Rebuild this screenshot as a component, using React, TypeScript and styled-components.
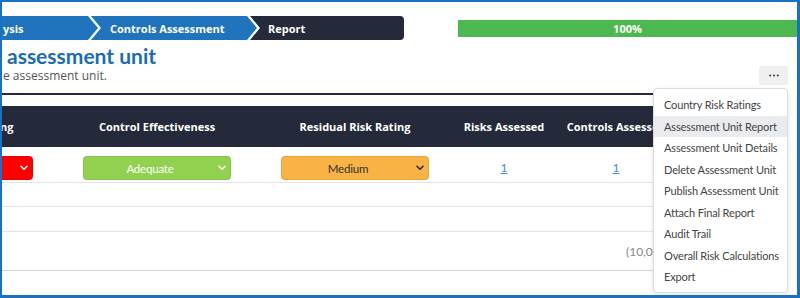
import React from "react";
import styled, { createGlobalStyle, css } from "styled-components";

const GlobalStyle = createGlobalStyle`
  html, body {
    margin: 0;
    padding: 0;
    background: #ffffff;
  }
`;

const BLUE = "#1f74bd";
const DARK = "#252a3a";

const Frame = styled.div`
  width: 800px;
  height: 298px;
  box-sizing: border-box;
  border: solid #1a71c1;
  border-width: 2px 3px 3px 2px;
  overflow: hidden;
  background: #ffffff;
  font-family: Lato, "Open Sans", sans-serif;
  display: flex;
  flex-direction: column;
`;

const TopBar = styled.div`
  display: flex;
  align-items: center;
  height: 24px;
  margin-top: 14px;
`;

const Stepper = styled.div`
  display: flex;
  height: 24px;
`;

const Step = styled.div<{ $kind: "first" | "middle" | "last"; $width: number; $indent: number }>`
  width: ${(p) => p.$width}px;
  height: 24px;
  box-sizing: border-box;
  padding-left: ${(p) => p.$indent}px;
  display: flex;
  align-items: center;
  color: #ffffff;
  font-family: "Open Sans", sans-serif;
  font-weight: 700;
  font-size: 11px;
  white-space: nowrap;
  background: ${(p) => (p.$kind === "last" ? DARK : BLUE)};
  ${(p) =>
    p.$kind === "first" &&
    css`
      clip-path: polygon(0 0, calc(100% - 10px) 0, 100% 50%, calc(100% - 10px) 100%, 0 100%);
    `}
  ${(p) =>
    p.$kind === "middle" &&
    css`
      margin-left: -7px;
      clip-path: polygon(0 0, calc(100% - 10px) 0, 100% 50%, calc(100% - 10px) 100%, 0 100%, 10px 50%);
    `}
  ${(p) =>
    p.$kind === "last" &&
    css`
      margin-left: -7px;
      border-radius: 0 4px 4px 0;
      clip-path: polygon(0 0, 100% 0, 100% 100%, 0 100%, 10px 50%);
    `}
`;

const Progress = styled.div`
  flex: 1;
  margin-left: 54px;
  height: 17px;
  line-height: 17px;
  background: #4cb850;
  color: #ffffff;
  text-align: center;
  font-family: "Open Sans", sans-serif;
  font-weight: 700;
  font-size: 11px;
`;

const TitleRow = styled.div`
  display: flex;
  justify-content: space-between;
  align-items: flex-end;
  margin-top: 3px;
  padding-right: 9px;
`;

const TitleBlock = styled.div`
  display: flex;
  flex-direction: column;
`;

const Title = styled.div`
  font-family: Lato, sans-serif;
  font-weight: 700;
  font-size: 21px;
  line-height: 25px;
  color: #1b6cb3;
  padding-left: 5px;
  white-space: nowrap;
`;

const Subtitle = styled.div`
  font-family: "Open Sans", sans-serif;
  font-size: 12px;
  line-height: 15px;
  color: #555555;
  padding-left: 1px;
  white-space: nowrap;
`;

const MoreWrap = styled.div`
  position: relative;
  margin-bottom: -2px;
`;

const MoreButton = styled.button`
  width: 29px;
  height: 19px;
  padding: 0;
  border: none;
  border-radius: 2px;
  background: #efefef;
  display: flex;
  align-items: center;
  justify-content: center;
`;

const Menu = styled.div`
  position: absolute;
  top: calc(100% + 3px);
  right: 0;
  width: 135px;
  box-sizing: border-box;
  padding: 5px 0 4px;
  background: #ffffff;
  border: 1px solid #dcdcdc;
  border-radius: 4px;
  box-shadow: 0 2px 6px rgba(0, 0, 0, 0.1);
  z-index: 10;
`;

const MenuItem = styled.div<{ $active?: boolean }>`
  height: 21.5px;
  line-height: 21.5px;
  padding-left: 10px;
  font-family: Lato, sans-serif;
  font-size: 11px;
  letter-spacing: -0.15px;
  color: #444444;
  white-space: nowrap;
  background: ${(p) => (p.$active ? "#e9ebef" : "transparent")};
`;

const Divider = styled.div`
  height: 2px;
  background: ${DARK};
  margin-top: 10px;
  margin-right: 9px;
`;

const Table = styled.div`
  margin-top: 11px;
  margin-right: 9px;
  display: flex;
  flex-direction: column;
`;

const Row = styled.div<{ $height: number; $head?: boolean; $line?: string }>`
  display: grid;
  grid-template-columns: 56px 198px 198px 100px 124px 1fr;
  height: ${(p) => p.$height}px;
  box-sizing: border-box;
  background: ${(p) => (p.$head ? DARK : "#ffffff")};
  border-bottom: ${(p) => (p.$head ? "none" : `1px solid ${p.$line || "#e4e4e4"}`)};
`;

const HeadCell = styled.div<{ $start?: boolean }>`
  display: flex;
  align-items: center;
  justify-content: ${(p) => (p.$start ? "flex-start" : "center")};
  color: #ffffff;
  font-family: "Open Sans", sans-serif;
  font-weight: 700;
  font-size: 11px;
  white-space: nowrap;
  overflow: hidden;
  text-indent: ${(p) => (p.$start ? "-2px" : "0")};
`;

const Cell = styled.div<{ $start?: boolean }>`
  display: flex;
  align-items: flex-start;
  justify-content: ${(p) => (p.$start ? "flex-start" : "center")};
  padding-top: 9px;
  min-width: 0;
`;

const NoteCell = styled.div<{ $indent: number }>`
  display: flex;
  align-items: center;
  padding-left: ${(p) => p.$indent}px;
  font-family: Lato, sans-serif;
  font-size: 12px;
  color: #888888;
  white-space: nowrap;
`;

const tones = {
  red: { bg: "#ff0000", fg: "#ffffff" },
  green: { bg: "#92d050", fg: "#ffffff" },
  orange: { bg: "#f9b244", fg: "#333333" },
};

const Select = styled.div<{ $tone: keyof typeof tones; $clipped?: boolean }>`
  position: relative;
  width: ${(p) => (p.$clipped ? 31 : 148)}px;
  height: 24px;
  box-sizing: border-box;
  padding-right: 14px;
  border: 1px solid rgba(0, 0, 0, 0.06);
  border-radius: ${(p) => (p.$clipped ? "0 4px 4px 0" : "4px")};
  background: ${(p) => tones[p.$tone].bg};
  color: ${(p) => tones[p.$tone].fg};
  display: flex;
  align-items: center;
  justify-content: center;
  font-family: Lato, sans-serif;
  font-size: 11.5px;
  letter-spacing: -0.2px;
`;

const Chevron = styled.svg`
  position: absolute;
  right: 4px;
  top: 50%;
  margin-top: -3px;
`;

const CountLink = styled.a`
  color: #3d8fe4;
  text-decoration: underline;
  font-family: Lato, sans-serif;
  font-size: 12px;
  line-height: 24px;
`;

const menuItems = [
  "Country Risk Ratings",
  "Assessment Unit Report",
  "Assessment Unit Details",
  "Delete Assessment Unit",
  "Publish Assessment Unit",
  "Attach Final Report",
  "Audit Trail",
  "Overall Risk Calculations",
  "Export",
];

function Arrow({ color }: { color: string }) {
  return (
    <Chevron width="8" height="6" viewBox="0 0 8 6">
      <path d="M1 1.2 L4 4.2 L7 1.2" fill="none" stroke={color} strokeWidth="1.5" strokeLinecap="round" strokeLinejoin="round" />
    </Chevron>
  );
}

function RatingSelect({ tone, label, clipped }: { tone: keyof typeof tones; label?: string; clipped?: boolean }) {
  return (
    <Select $tone={tone} $clipped={clipped}>
      {label}
      <Arrow color={tone === "orange" ? "#222222" : "#ffffff"} />
    </Select>
  );
}

export default function App() {
  return (
    <>
      <GlobalStyle />
      <Frame>
        <TopBar>
          <Stepper>
            <Step $kind="first" $width={96} $indent={1}>ysis</Step>
            <Step $kind="middle" $width={166} $indent={19}>Controls Assessment</Step>
            <Step $kind="last" $width={154} $indent={18}>Report</Step>
          </Stepper>
          <Progress>100%</Progress>
        </TopBar>

        <TitleRow>
          <TitleBlock>
            <Title>assessment unit</Title>
            <Subtitle>e assessment unit.</Subtitle>
          </TitleBlock>
          <MoreWrap>
            <MoreButton aria-label="More actions">
              <svg width="10" height="3" viewBox="0 0 10 3">
                <circle cx="1.2" cy="1.5" r="1" fill="#333" />
                <circle cx="5" cy="1.5" r="1" fill="#333" />
                <circle cx="8.8" cy="1.5" r="1" fill="#333" />
              </svg>
            </MoreButton>
            <Menu>
              {menuItems.map((item) => (
                <MenuItem key={item} $active={item === "Assessment Unit Report"}>
                  {item}
                </MenuItem>
              ))}
            </Menu>
          </MoreWrap>
        </TitleRow>

        <Divider />

        <Table>
          <Row $head $height={41}>
            <HeadCell $start>ng</HeadCell>
            <HeadCell>Control Effectiveness</HeadCell>
            <HeadCell>Residual Risk Rating</HeadCell>
            <HeadCell>Risks Assessed</HeadCell>
            <HeadCell>Controls Assessed</HeadCell>
            <HeadCell />
          </Row>
          <Row $height={36}>
            <Cell $start>
              <RatingSelect tone="red" clipped />
            </Cell>
            <Cell>
              <RatingSelect tone="green" label="Adequate" />
            </Cell>
            <Cell>
              <RatingSelect tone="orange" label="Medium" />
            </Cell>
            <Cell>
              <CountLink href="#">1</CountLink>
            </Cell>
            <Cell>
              <CountLink href="#">1</CountLink>
            </Cell>
            <Cell />
          </Row>
          <Row $height={24} />
          <Row $height={25} />
          <Row $height={39} $line="#d6d6d6">
            <div />
            <div />
            <div />
            <div />
            <NoteCell $indent={72}>(10,000)</NoteCell>
            <div />
          </Row>
        </Table>
      </Frame>
    </>
  );
}
